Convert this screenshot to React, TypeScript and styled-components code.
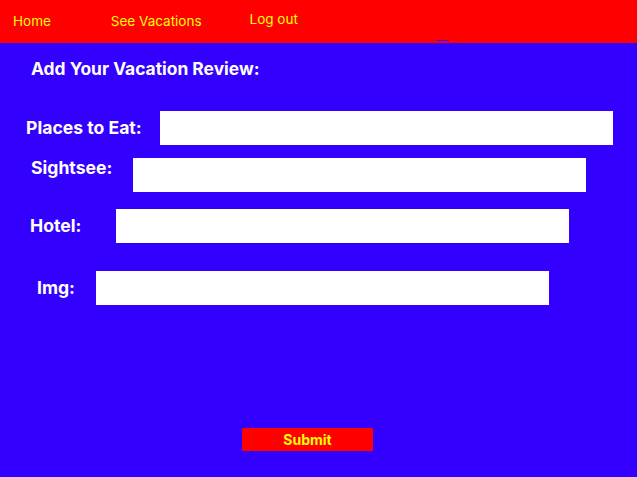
import React from 'react';
import styled, { createGlobalStyle } from 'styled-components';

const GlobalStyle = createGlobalStyle`
  html, body {
    margin: 0;
    padding: 0;
    background: #3300ff;
    font-family: Inter, "Liberation Sans", sans-serif;
  }
  #root {
    min-height: 477px;
  }
`;

const Page = styled.div`
  width: 637px;
  height: 477px;
  background: #3300ff;
  display: flex;
  flex-direction: column;
  overflow: hidden;
`;

const NavBar = styled.nav`
  height: 43px;
  background: #ff0000;
  display: flex;
  align-items: flex-start;
  position: relative;
`;

const NavLink = styled.a<{ $left: number; $top: number }>`
  margin-left: ${({ $left }) => $left}px;
  margin-top: ${({ $top }) => $top}px;
  color: #ffff00;
  font-size: 13.5px;
  line-height: 17px;
  text-decoration: none;
  cursor: pointer;
`;

const EmptyLink = styled.span`
  position: absolute;
  left: 437px;
  top: 40px;
  width: 12px;
  height: 1px;
  background: #3300ff;
`;

const Form = styled.form`
  display: flex;
  flex-direction: column;
  flex: 1;
`;

const Heading = styled.h2`
  margin: 14px 0 0 31px;
  color: #fff;
  font-size: 17.4px;
  font-weight: 700;
  line-height: 24px;
`;

const Row = styled.div<{ $indent: number; $top: number; $align: string }>`
  display: flex;
  align-items: ${({ $align }) => $align};
  margin-top: ${({ $top }) => $top}px;
  padding-left: ${({ $indent }) => $indent}px;
`;

const Label = styled.label<{ $width: number }>`
  width: ${({ $width }) => $width}px;
  flex-shrink: 0;
  color: #fff;
  font-size: 17.6px;
  font-weight: 700;
  line-height: 20px;
  white-space: nowrap;
`;

const Input = styled.input`
  width: 453px;
  height: 34px;
  box-sizing: border-box;
  border: none;
  background: #fff;
  outline: none;
  padding: 0 6px;
  font-size: 14px;
`;

const Submit = styled.button`
  align-self: flex-start;
  margin: auto 0 26px 242px;
  width: 131px;
  height: 23px;
  border: none;
  background: #ff0000;
  color: #ffff00;
  font-family: Inter, "Liberation Sans", sans-serif;
  font-size: 14px;
  font-weight: 700;
  cursor: pointer;
`;

const fields = [
  { label: 'Places to Eat:', name: 'eat', indent: 26, width: 134, top: 30, align: 'center' },
  { label: 'Sightsee:', name: 'sightsee', indent: 31, width: 102, top: 13, align: 'flex-start' },
  { label: 'Hotel:', name: 'hotel', indent: 30, width: 86, top: 17, align: 'center' },
  { label: 'Img:', name: 'img', indent: 37, width: 59, top: 28, align: 'center' },
];

const App = () => {
  return (
    <Page>
      <GlobalStyle />
      <NavBar>
        <NavLink $left={13} $top={13}>Home</NavLink>
        <NavLink $left={60} $top={13}>See Vacations</NavLink>
        <NavLink $left={48} $top={11}>Log out</NavLink>
        <EmptyLink />
      </NavBar>
      <Form onSubmit={(e) => e.preventDefault()}>
        <Heading>Add Your Vacation Review:</Heading>
        {fields.map((f) => (
          <Row key={f.name} $indent={f.indent} $top={f.top} $align={f.align}>
            <Label htmlFor={f.name} $width={f.width}>{f.label}</Label>
            <Input id={f.name} name={f.name} type="text" />
          </Row>
        ))}
        <Submit type="submit">Submit</Submit>
      </Form>
    </Page>
  );
};

export default App;
